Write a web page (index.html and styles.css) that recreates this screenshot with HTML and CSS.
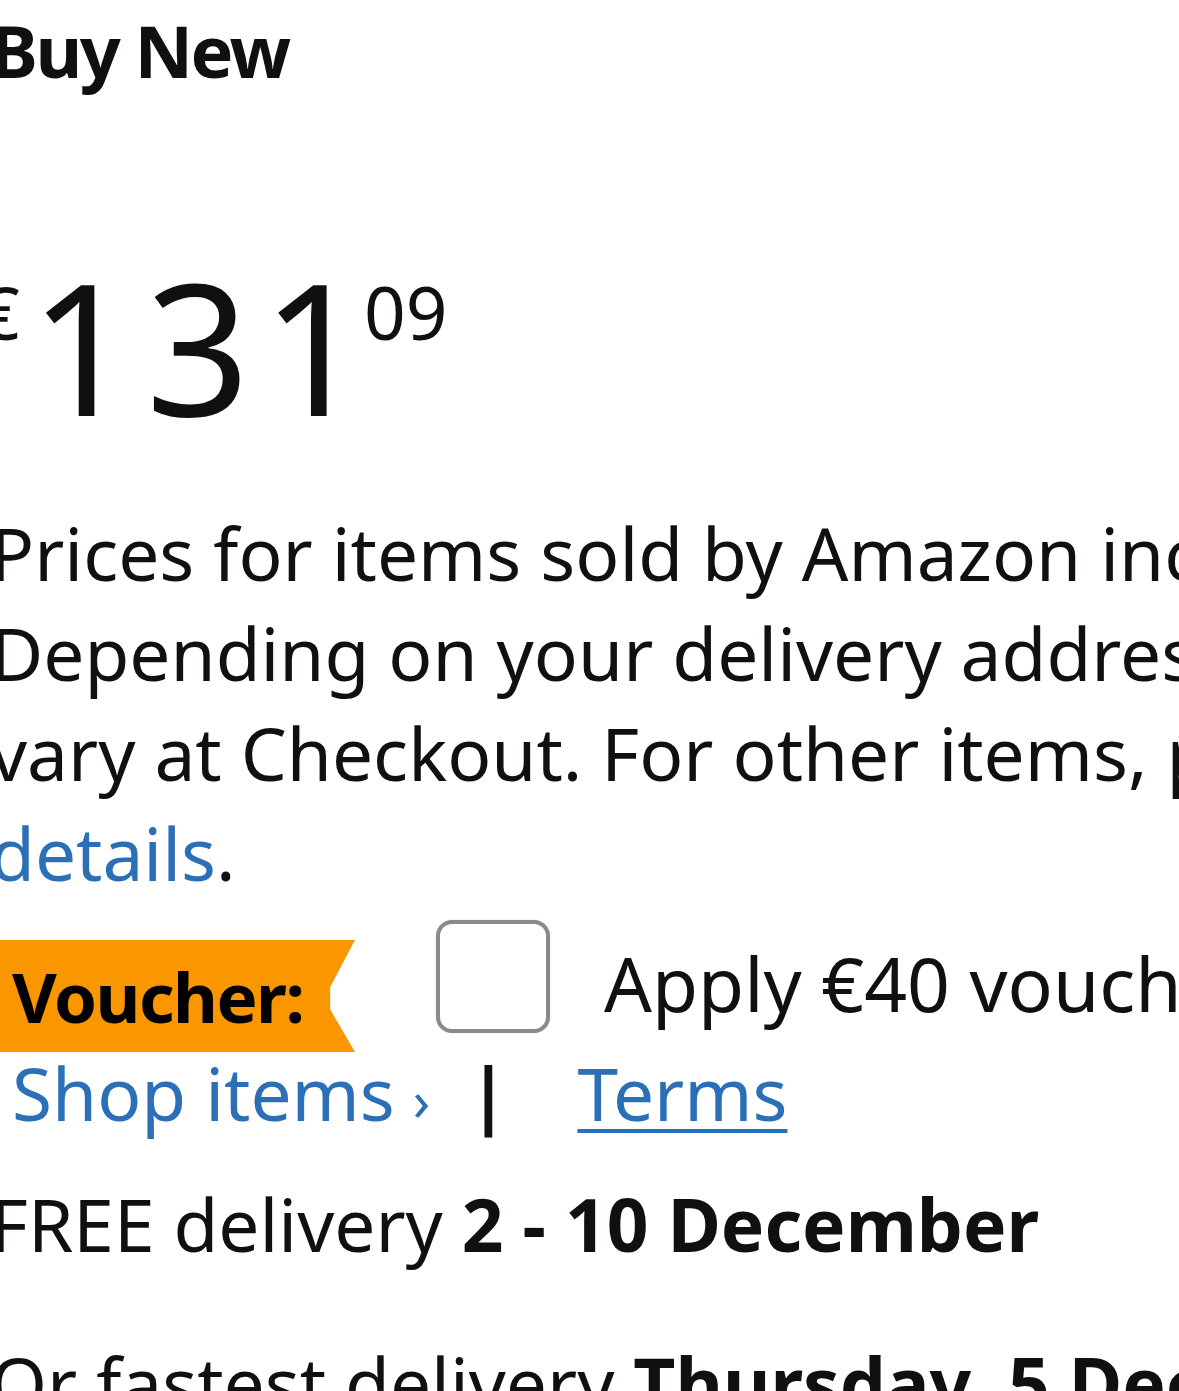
FILE: index.html
```html
<!DOCTYPE html>
<html lang="en">
<head>
<meta charset="utf-8">
<title>Buy New</title>
<link rel="stylesheet" href="styles.css">
</head>
<body>
<main class="offer">
  <h1 class="offer-title">Buy New</h1>

  <div class="price">
    <span class="price-symbol">€</span>
    <span class="price-whole">13<span class="price-last">1</span></span>
    <span class="price-fraction">09</span>
  </div>

  <p class="price-note">
    <span class="note-line">Prices for items sold by Amazon include VAT.</span>
    <span class="note-line">Depending on your delivery address, VAT may</span>
    <span class="note-line">vary at Checkout. For other items, please see</span>
    <span class="note-line"><a class="link" href="#">details</a>.</span>
  </p>

  <div class="voucher">
    <span class="voucher-badge">Voucher:</span>
    <span class="voucher-check"></span>
    <span class="voucher-text">Apply €40 voucher</span>
  </div>

  <div class="voucher-links">
    <a class="link shop" href="#">Shop items<span class="chev">›</span></a>
    <span class="sep">|</span>
    <a class="link terms" href="#">Terms</a>
  </div>

  <p class="delivery">FREE delivery <b>2 - 10 December</b></p>
  <p class="delivery fastest">Or fastest delivery <b>Thursday, 5 December</b></p>
</main>
</body>
</html>
```

FILE: styles.css
```css
html, body {
  margin: 0;
  padding: 0;
  background: #ffffff;
  overflow: hidden;
}

body {
  width: 1179px;
  height: 1391px;
  font-family: "Noto Sans", "Open Sans", "DejaVu Sans", sans-serif;
  color: #0f1111;
}

.offer {
  margin-left: -10px;
  width: 1189px;
  overflow: hidden;
}

.offer-title {
  margin: 0;
  font-size: 72px;
  font-weight: 700;
  line-height: 100px;
  letter-spacing: -2.5px;
  white-space: nowrap;
}

.price {
  display: flex;
  align-items: flex-start;
  margin-top: 149px;
  margin-left: -12px;
  height: 190px;
}

.price-symbol,
.price-fraction {
  font-size: 73px;
  line-height: 1;
  margin-top: 26px;
}

.price-whole {
  font-size: 182px;
  line-height: 1;
  letter-spacing: 12px;
  margin-top: 5px;
  margin-left: 10px;
}

.price-last {
  letter-spacing: 0;
}

.price-fraction {
  margin-left: -2px;
}

.price-note {
  margin: 64px 0 0 0;
  font-size: 73px;
  line-height: 100px;
}

.note-line {
  display: block;
  white-space: nowrap;
}

.link {
  color: #2b6fb6;
  text-decoration: none;
}

.voucher {
  display: flex;
  align-items: flex-start;
  margin-top: 17px;
  white-space: nowrap;
}

.voucher-badge {
  display: flex;
  align-items: center;
  flex: none;
  box-sizing: border-box;
  width: 365px;
  height: 112px;
  margin-top: 20px;
  padding-left: 22px;
  background: #f99600;
  font-size: 69px;
  font-weight: 700;
  letter-spacing: -1.5px;
  color: #000000;
  clip-path: polygon(0 0, 100% 0, 93.2% 42%, 93.2% 62%, 100% 100%, 0 100%);
}

.voucher-check {
  flex: none;
  box-sizing: border-box;
  width: 114px;
  height: 113px;
  margin-left: 81px;
  border: 4px solid #8a8a8a;
  border-radius: 16px;
  box-shadow: 0 0 1px #a0a0a0;
}

.voucher-text {
  margin-left: 54px;
  margin-top: 13px;
  font-size: 75px;
  line-height: 100px;
}

.voucher-links {
  display: flex;
  align-items: baseline;
  padding-left: 22px;
  font-size: 73px;
  line-height: 82px;
  white-space: nowrap;
}

.chev {
  font-size: 56px;
  margin-left: 18px;
}

.sep {
  margin-left: 38px;
  font-weight: 700;
  color: #0f1111;
}

.terms {
  margin-left: 69px;
  text-decoration: underline;
  text-decoration-thickness: 4px;
  text-underline-offset: 8px;
}

.delivery {
  margin: 34px 0 0 0;
  font-size: 73px;
  line-height: 100px;
  white-space: nowrap;
}

.delivery.fastest {
  margin-top: 59px;
}

.delivery b {
  font-weight: 700;
}
```
